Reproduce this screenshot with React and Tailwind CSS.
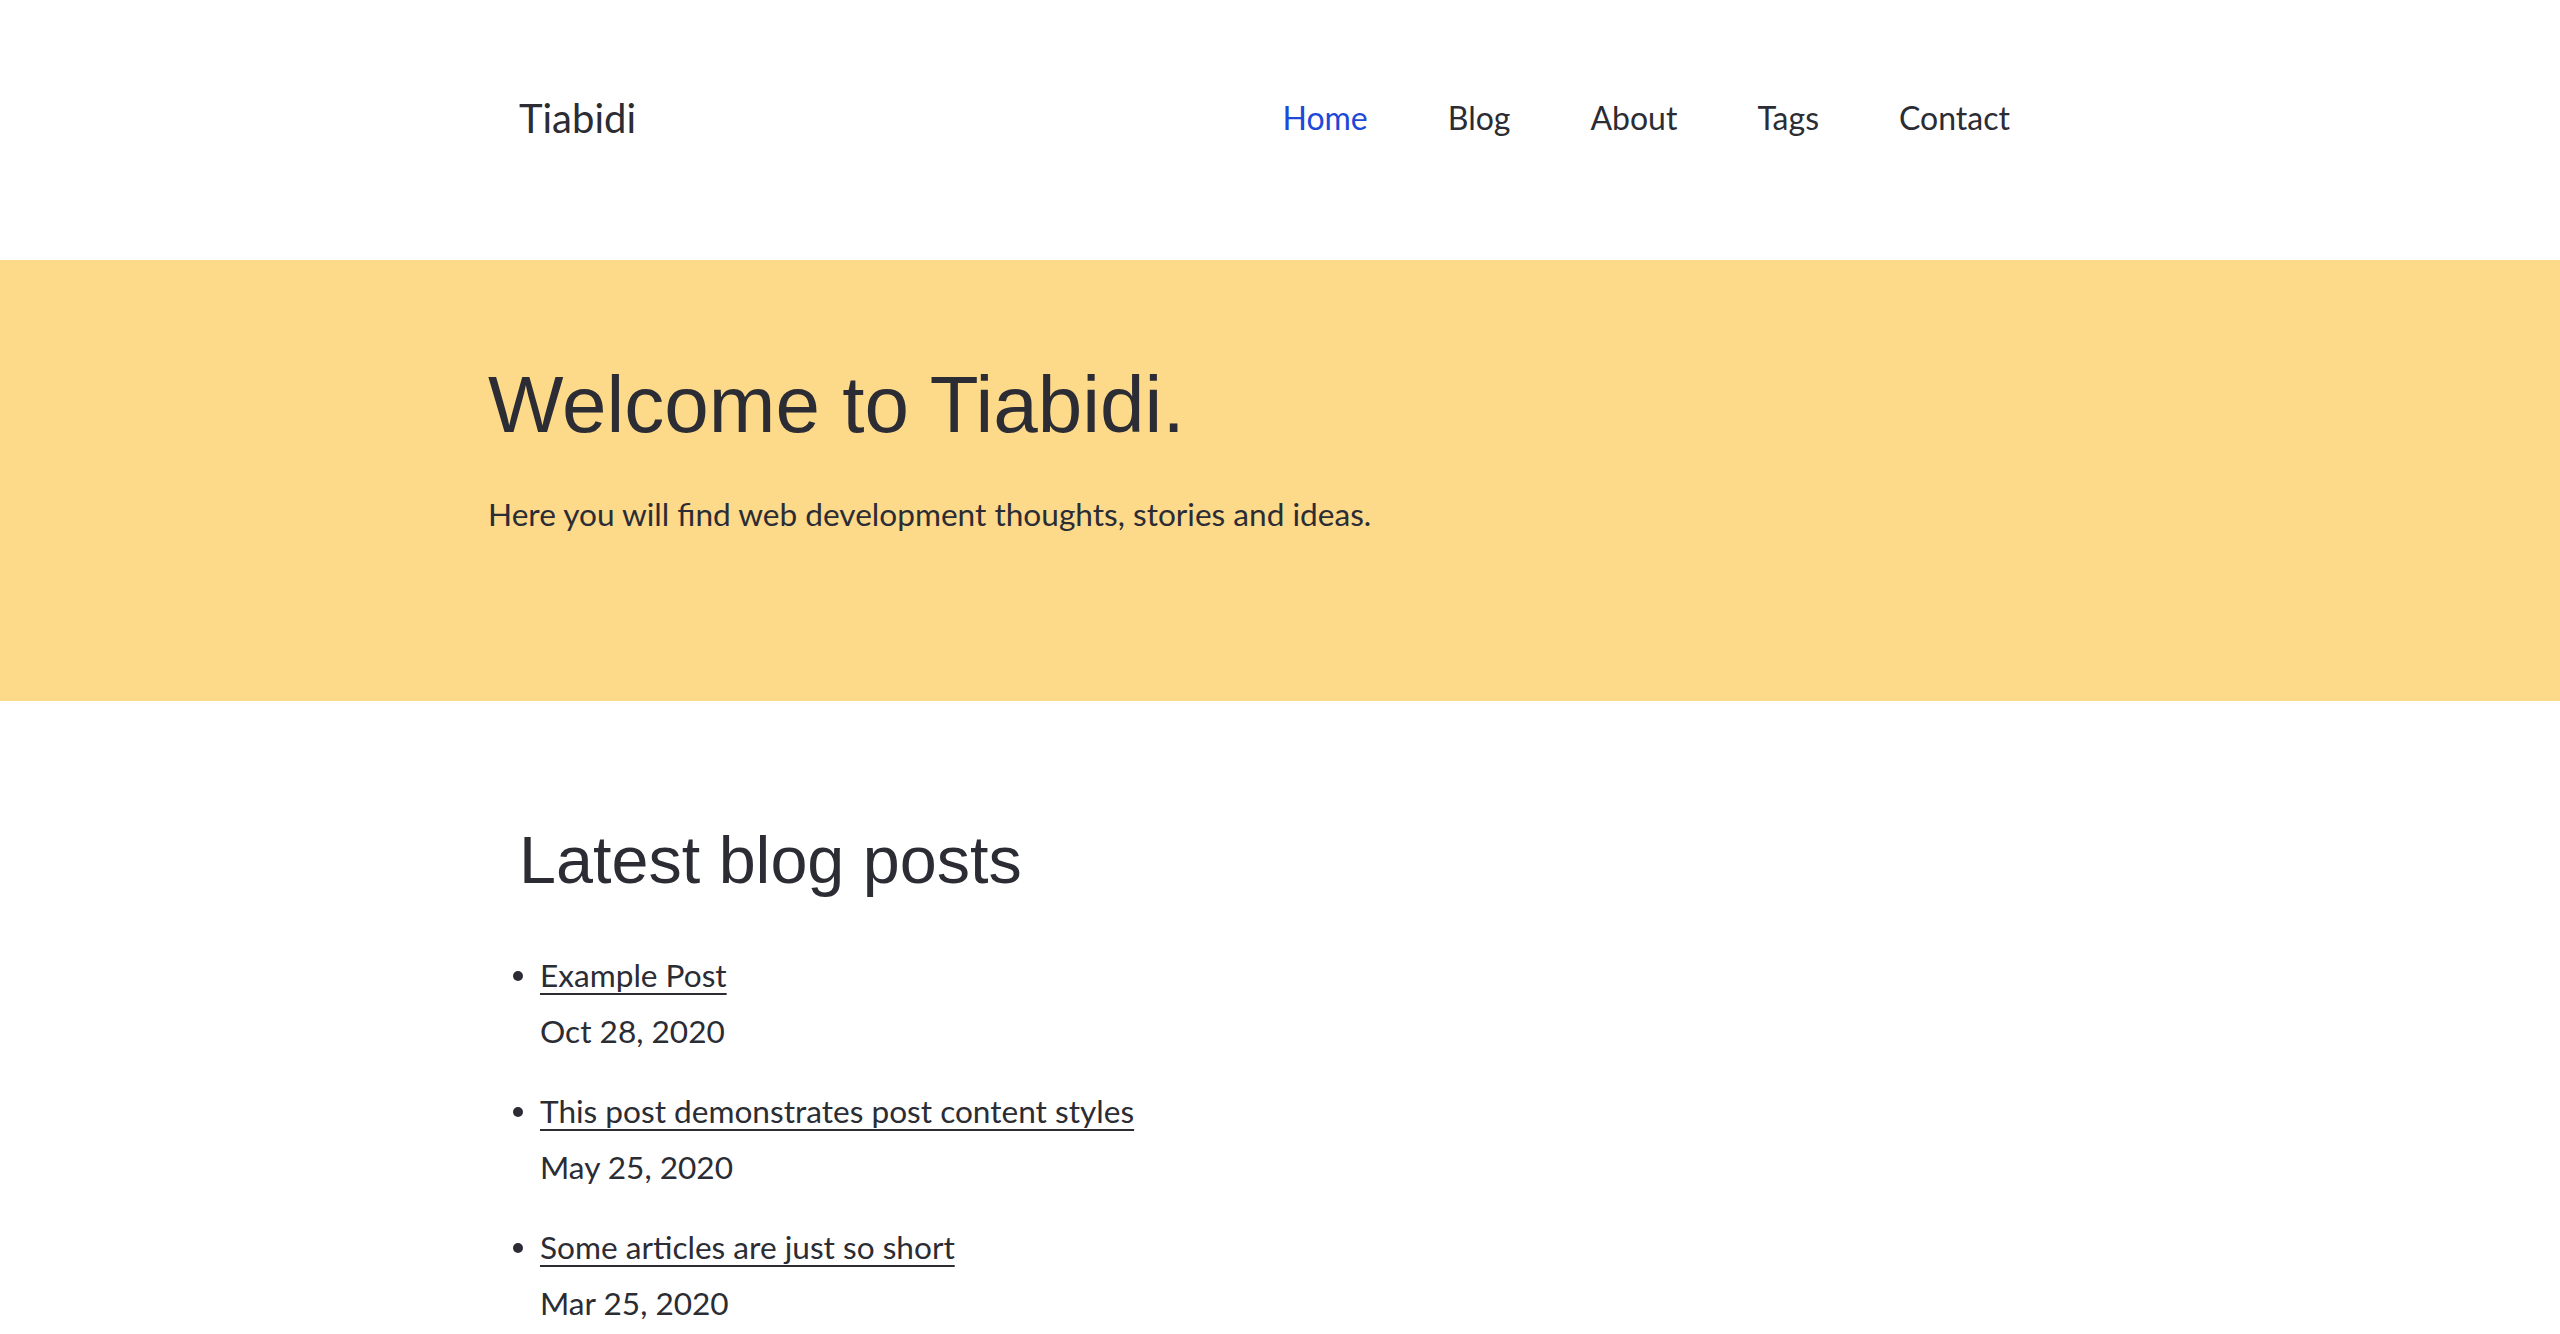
import React from "react";

// Top navigation links
const links = ["Home", "Blog", "About", "Tags", "Contact"];

// Latest posts
const posts = [
  { title: "Example Post", date: "Oct 28, 2020" },
  { title: "This post demonstrates post content styles", date: "May 25, 2020" },
  { title: "Some articles are just so short", date: "Mar 25, 2020" },
];

const lato = "font-['Lato','Liberation_Sans',sans-serif]";
const arial = "font-['Liberation_Sans',Arial,sans-serif]";

const Header = () => (
  <header className="h-[260px] pb-[24px] flex items-center">
    <div className="w-[1600px] mx-auto flex items-center justify-between pl-[39px] pr-[70px]">
      <a className={`${lato} text-[40px] text-[#2b2c34]`} href="#">
        Tiabidi
      </a>
      <nav className="flex gap-[80px]">
        {links.map((link) => (
          <a
            key={link}
            href="#"
            className={`${lato} text-[32px] ${
              link === "Home" ? "text-[#1d48d8]" : "text-[#2b2c34]"
            }`}
          >
            {link}
          </a>
        ))}
      </nav>
    </div>
  </header>
);

const Hero = () => (
  <section className="bg-[#fdd98a] h-[441px]">
    <div className="w-[1600px] mx-auto pl-[8px] pt-[97px]">
      <h1 className={`${arial} text-[80px] leading-[1.2] text-[#2b2c34]`}>
        Welcome to Tiabidi.
      </h1>
      <p className={`${lato} text-[31.6px] leading-[48px] mt-[37px] text-[#2b2c34]`}>
        Here you will find web development thoughts, stories and ideas.
      </p>
    </div>
  </section>
);

const LatestPosts = () => (
  <section className="w-[1600px] mx-auto pl-[39px] pt-[120px]">
    <h2 className={`${arial} text-[66.5px] leading-[1.2] text-[#2b2c34]`}>
      Latest blog posts
    </h2>
    <ul className="mt-[46px] flex flex-col gap-[24px]">
      {posts.map((post) => (
        <li
          key={post.title}
          className={`${lato} text-[31.6px] leading-[56px] text-[#2b2c34] flex`}
        >
          <span className="w-[21px] shrink-0 flex items-start pt-[24px]">
            <span className="block w-[10px] h-[10px] rounded-full bg-[#2b2c34] -ml-[6px]" />
          </span>
          <div className="flex flex-col">
            <a
              href="#"
              className="underline underline-offset-[6px] decoration-[2px] decoration-[#2b2c34]"
            >
              {post.title}
            </a>
            <span>{post.date}</span>
          </div>
        </li>
      ))}
    </ul>
  </section>
);

const App = () => {
  return (
    <div className="min-h-screen bg-white">
      <Header />
      <Hero />
      <LatestPosts />
    </div>
  );
};

export default App;
